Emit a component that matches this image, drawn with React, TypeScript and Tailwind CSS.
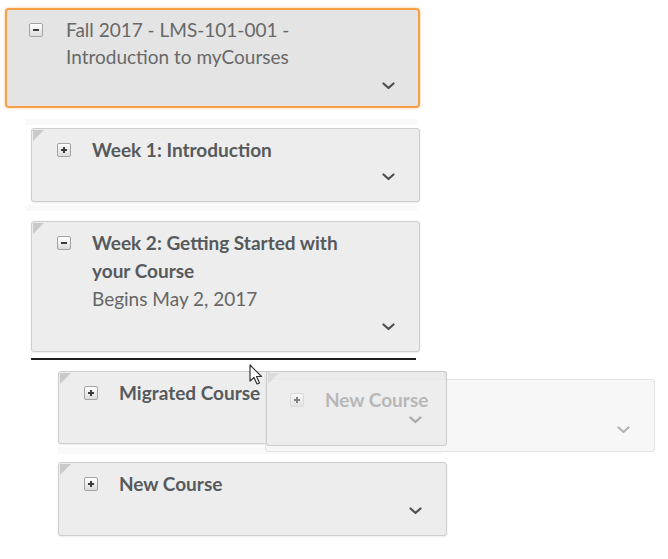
import React from "react";

const Toggle = ({ open, faded }: { open: boolean; faded?: boolean }) => (
  <span
    className={`flex h-[14px] w-[14px] items-center justify-center rounded-[2px] border bg-gradient-to-b from-white to-[#dcdcdc] ${
      faded ? "border-[#cfcfcf] opacity-60" : "border-[#a3a3a3]"
    }`}
  >
    <svg width="8" height="8" viewBox="0 0 8 8">
      <rect x="1" y="3" width="6" height="2" fill="#3c3c3c" />
      {!open && <rect x="3" y="1" width="2" height="6" fill="#3c3c3c" />}
    </svg>
  </span>
);

const Chevron = ({ color = "#4f4f4f" }: { color?: string }) => (
  <svg width="13" height="8" viewBox="0 0 13 8">
    <path d="M1.5 1.5 L6.5 6 L11.5 1.5" fill="none" stroke={color} strokeWidth="2.2" strokeLinecap="round" strokeLinejoin="round" />
  </svg>
);

const Corner = ({ color = "#c9c9c9" }: { color?: string }) => (
  <svg className="absolute left-[1px] top-[1px]" width="11" height="11" viewBox="0 0 11 11">
    <polygon points="0,0 11,0 0,11" fill={color} />
  </svg>
);

type CardProps = {
  lines: string[];
  sub?: string;
  open?: boolean;
  className: string;
};

const Card = ({ lines, sub, open = false, className }: CardProps) => (
  <div className={`relative flex flex-col rounded-[3px] border border-[#cdcdcd] bg-[#ededed] pt-[7px] pb-[11px] shadow-[0_1px_2px_rgba(0,0,0,0.08)] ${className}`}>
    <Corner />
    <div className="flex pl-[25px]">
      <div className="flex h-[28px] items-center">
        <Toggle open={open} />
      </div>
      <div className="ml-[21px] text-[19px] leading-[28px]">
        {lines.map((l) => (
          <div key={l} className="font-bold text-[#565a5c]">{l}</div>
        ))}
        {sub && <div className="text-[#666]">{sub}</div>}
      </div>
    </div>
    <div className="flex h-[28px] items-center justify-end pr-[24px]">
      <Chevron />
    </div>
  </div>
);

const Band = () => <div className="ml-[25px] h-[6px] w-[392px] bg-[#f9f9f9]" />;

export default function App() {
  return (
    <div className="relative h-[559px] w-[668px] overflow-hidden bg-white font-['Lato','Liberation_Sans',sans-serif]">
      <div className="flex flex-col pt-[8px]">
        {/* course root */}
        <div className="ml-[5px] flex h-[100px] w-[415px] flex-col rounded-[4px] border-2 border-[#f7a04a] bg-[#e4e4e4] pt-[6px] pb-[6px] shadow-[0_0_3px_rgba(247,160,74,0.6)]">
          <div className="flex pl-[22px]">
            <div className="flex h-[28px] items-center">
              <Toggle open />
            </div>
            <div className="ml-[23px] text-[19px] leading-[27px] text-[#686868]">
              <div>Fall 2017 - LMS-101-001 -</div>
              <div>Introduction to myCourses</div>
            </div>
          </div>
          <div className="mt-auto flex h-[28px] items-center justify-end pr-[23px]">
            <Chevron />
          </div>
        </div>

        <div className="mt-[11px]">
          <Band />
        </div>
        <Card lines={["Week 1: Introduction"]} className="mt-[3px] ml-[31px] h-[74px] w-[389px]" />
        <div className="mt-[3px]">
          <Band />
        </div>

        <Card
          open
          lines={["Week 2: Getting Started with", "your Course"]}
          sub="Begins May 2, 2017"
          className="mt-[10px] ml-[31px] h-[131px] w-[389px]"
        />

        <div className="mt-[6px] ml-[31px] h-[2px] w-[385px] bg-[#1e1e1e]" />

        <Card lines={["Migrated Course"]} className="mt-[11px] ml-[58px] h-[73px] w-[388px]" />
        <div className="mt-[3px] ml-[58px] h-[7px] w-[384px] bg-[#f9f9f9]" />
        <Card lines={["New Course"]} className="mt-[8px] ml-[58px] h-[74px] w-[389px]" />
      </div>

      {/* drag ghost */}
      <div className="absolute left-[265px] top-[379px] flex h-[73px] w-[390px] items-end justify-end rounded-[3px] border border-[#e3e3e3] bg-[#f5f5f5]/80 pb-[17px] pr-[24px]">
        <Chevron color="#b4b4b4" />
      </div>
      <div className="absolute left-[266px] top-[371px] flex h-[75px] w-[181px] flex-col rounded-[3px] border border-[#c4c4c4]/80 bg-[#e9e9e9]/70 pt-[14px]">
        <Corner color="#dcdcdc" />
        <div className="flex h-[28px] items-center pl-[23px]">
          <Toggle open={false} faded />
          <span className="ml-[21px] whitespace-nowrap text-[19px] font-bold text-[#b7b7b7]">New Course</span>
        </div>
        <div className="mt-[2px] flex justify-end pr-[24px]">
          <Chevron color="#a9a9a9" />
        </div>
      </div>

      {/* cursor */}
      <svg className="absolute left-[249px] top-[364px]" width="16" height="22" viewBox="0 0 16 22">
        <path d="M1 1 L1 17 L5 13.5 L8 20 L10.5 19 L7.5 12.5 L12.5 12.5 Z" fill="white" stroke="#333" strokeWidth="1.2" strokeLinejoin="round" />
      </svg>
    </div>
  );
}
